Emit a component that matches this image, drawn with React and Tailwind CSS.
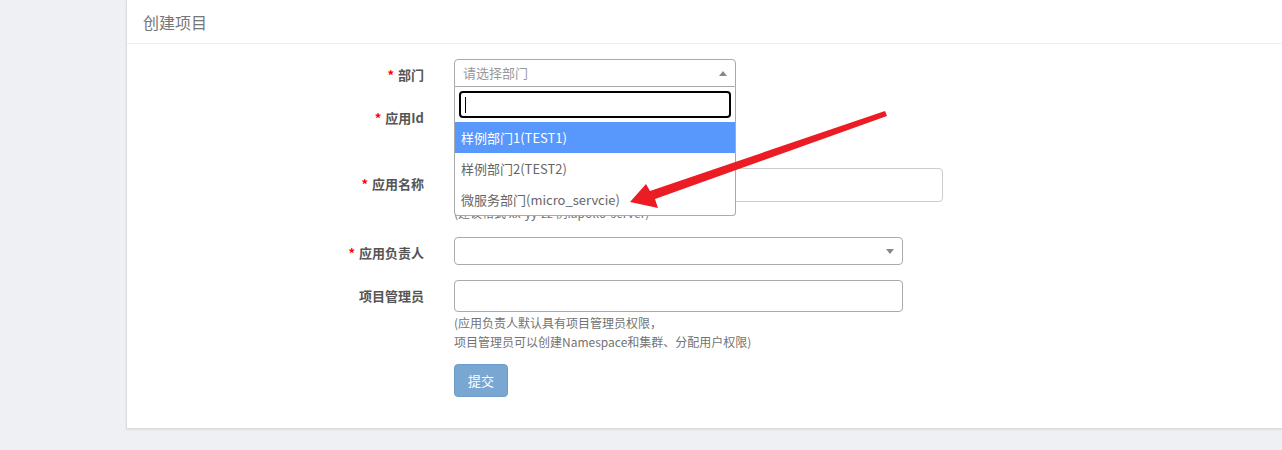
import React from "react";

const FONT = { fontFamily: '"Noto Sans CJK SC", "Open Sans", sans-serif' };

const Label = ({ required, children }) => (
  <div className="w-[327px] shrink-0 pr-[30px] pt-[6px] text-right text-[13px] font-bold leading-[20px] text-[#555]">
    {required && <span className="mr-[4px] text-[#f00]">*</span>}
    {children}
  </div>
);

const Caret = ({ up }) => (
  <span
    className={
      up
        ? "h-0 w-0 border-x-[4px] border-b-[5px] border-x-transparent border-b-[#888]"
        : "h-0 w-0 border-x-[4px] border-t-[5px] border-x-transparent border-t-[#888]"
    }
  />
);

export default function App() {
  return (
    <div className="relative h-[450px] w-full overflow-hidden bg-[#eff0f4]" style={FONT}>
      <div className="flex">
        <div className="w-[126px] shrink-0" />
        <div className="h-[429px] flex-1 border-b border-l border-[#dcdcdc] bg-white shadow-[0_1px_2px_rgba(0,0,0,0.08)]">
          <div className="flex h-[44px] items-center border-b border-[#eeeeee] pl-[16px] text-[16px] text-[#777]">
            创建项目
          </div>

          <div className="flex flex-col pt-[15px]">
            {/* 部门 */}
            <div className="flex">
              <Label required>部门</Label>
              <div className="relative">
                <div className="flex h-[28px] w-[282px] items-center justify-between rounded-t-[4px] border border-[#aaa] px-[8px] text-[13px] text-[#999]">
                  <span>请选择部门</span>
                  <Caret up />
                </div>
                <div className="absolute left-0 top-[28px] z-10 w-[282px] rounded-b-[4px] border border-t-0 border-[#aaa] bg-white text-[13px] text-[#666]">
                  <div className="p-[4px]">
                    <div className="flex h-[27px] items-center rounded-[4px] border-2 border-black px-[4px]">
                      <span className="h-[16px] w-px bg-black" />
                    </div>
                  </div>
                  <div className="flex h-[31px] items-center bg-[#5897fb] px-[6px] text-white">样例部门1(TEST1)</div>
                  <div className="flex h-[31px] items-center px-[6px]">样例部门2(TEST2)</div>
                  <div className="flex h-[31px] items-center px-[6px]">微服务部门(micro_servcie)</div>
                </div>
              </div>
            </div>

            {/* 应用Id */}
            <div className="mt-[15px] flex">
              <Label required>应用Id</Label>
              <div>
                <div className="h-[34px] w-[280px] rounded-[4px] border border-[#ccc]" />
                <div className="mt-[3px] h-[17px]" />
              </div>
            </div>

            {/* 应用名称 */}
            <div className="mt-[12px] flex">
              <Label required>应用名称</Label>
              <div>
                <div className="h-[34px] w-[489px] rounded-[4px] border border-[#ccc]" />
                <div className="mt-[2px] text-[12px] leading-[17px] text-[#737373]">(建议格式 xx-yy-zz 例:apollo-server)</div>
              </div>
            </div>

            {/* 应用负责人 */}
            <div className="mt-[16px] flex">
              <Label required>应用负责人</Label>
              <div className="flex h-[28px] w-[449px] items-center justify-end rounded-[4px] border border-[#aaa] px-[8px]">
                <Caret />
              </div>
            </div>

            {/* 项目管理员 */}
            <div className="mt-[15px] flex">
              <Label>项目管理员</Label>
              <div>
                <div className="h-[32px] w-[449px] rounded-[4px] border border-[#aaa]" />
                <div className="mt-[1px] text-[12px] leading-[19px] text-[#737373]">
                  (应用负责人默认具有项目管理员权限，
                  <br />
                  项目管理员可以创建Namespace和集群、分配用户权限)
                </div>
                <button className="mt-[13px] flex h-[33px] w-[54px] items-center justify-center rounded-[4px] border border-[#6c9cc9] bg-[#7aa7d1] text-[13px] text-white">
                  提交
                </button>
              </div>
            </div>
          </div>
        </div>
      </div>

      {/* annotation arrow */}
      <svg className="pointer-events-none absolute left-0 top-0 z-20" width="1282" height="450">
        <polygon
          points="885,111 887,116 655,199 658,208 630,202 646,184 650,191"
          fill="#ec1c24"
        />
      </svg>
    </div>
  );
}
